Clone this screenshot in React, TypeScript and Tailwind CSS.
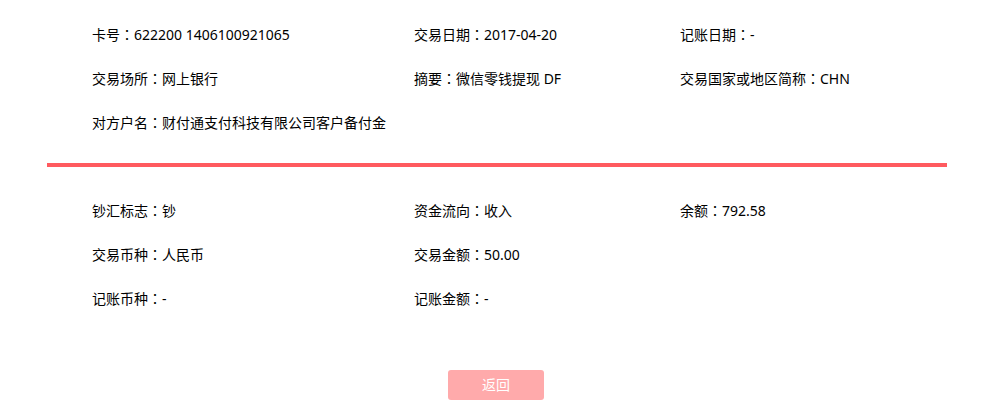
import React from 'react';

type Field = { label: string; value: string };

const topRows: Field[][] = [
  [
    { label: '卡号', value: '622200 1406100921065' },
    { label: '交易日期', value: '2017-04-20' },
    { label: '记账日期', value: '-' },
  ],
  [
    { label: '交易场所', value: '网上银行' },
    { label: '摘要', value: '微信零钱提现 DF' },
    { label: '交易国家或地区简称', value: 'CHN' },
  ],
  [{ label: '对方户名', value: '财付通支付科技有限公司客户备付金' }],
];

const bottomRows: Field[][] = [
  [
    { label: '钞汇标志', value: '钞' },
    { label: '资金流向', value: '收入' },
    { label: '余额', value: '792.58' },
  ],
  [
    { label: '交易币种', value: '人民币' },
    { label: '交易金额', value: '50.00' },
  ],
  [
    { label: '记账币种', value: '-' },
    { label: '记账金额', value: '-' },
  ],
];

// column widths from the screenshot: 92 → 414 → 680
const colWidth = ['w-[322px]', 'w-[266px]', 'w-[266px]'];

const FieldRows = ({ rows }: { rows: Field[][] }) => (
  <div className="flex flex-col">
    {rows.map((row, i) => (
      <div key={i} className="flex h-[44px] items-center">
        {row.map((f, j) => (
          <div key={j} className={`${colWidth[j]} whitespace-nowrap`}>
            {f.label}
            {/* centered full-width colon */}
            <span className="font-['Noto_Sans_CJK_TC',sans-serif]">：</span>
            {f.value}
          </div>
        ))}
      </div>
    ))}
  </div>
);

export default function App() {
  return (
    <div
      className="w-[989px] h-[407px] overflow-hidden bg-white text-[14px] leading-5 text-black"
      style={{ fontFamily: '"Noto Sans", "Noto Sans CJK SC", sans-serif' }}
    >
      <div className="pt-[12px] pl-[92px]">
        <FieldRows rows={topRows} />
      </div>
      <div className="mt-[19px] ml-[47px] w-[900px] h-[4px] bg-[#ff5a5f]" />
      <div className="mt-[21px] pl-[92px]">
        <FieldRows rows={bottomRows} />
      </div>
      <div className="mt-[50px] flex justify-center pl-[3px]">
        <button className="w-[96px] h-[30px] rounded-[3px] bg-[#ffaaab] text-white text-[14px]">
          返回
        </button>
      </div>
    </div>
  );
}
